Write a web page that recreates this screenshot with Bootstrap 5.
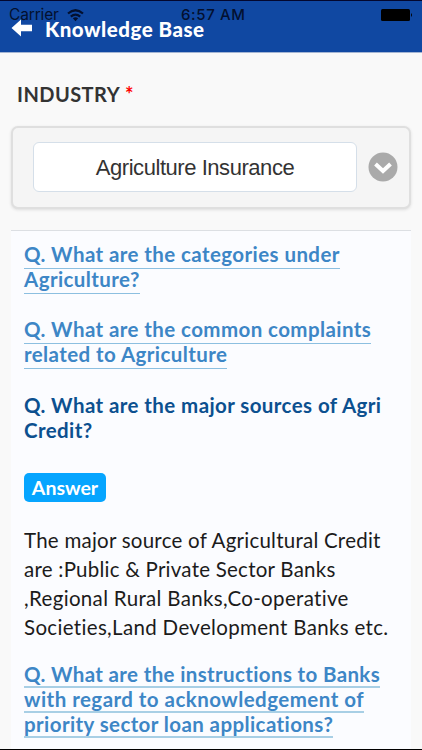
<!DOCTYPE html>
<html lang="en">
<head>
<meta charset="utf-8">
<meta name="viewport" content="width=device-width, initial-scale=1">
<title>Knowledge Base</title>
<link href="https://cdn.jsdelivr.net/npm/bootstrap@5.3.0/dist/css/bootstrap.min.css" rel="stylesheet">
<style>
body{background:#f9f9f9;font-family:Lato,"Open Sans",sans-serif;height:750px;overflow:hidden;border-bottom:1px solid #000}
.topbar{height:53px;background:#1048a2;border-top:1px solid #03072e;border-bottom:1px solid #a4b5d3}
.status{top:4px;left:0;right:0;height:20px;padding:0 9px;color:#03102f;font:15.5px/20px Inter,sans-serif;letter-spacing:-.15px}
.clock{left:181px;top:0;font-weight:500;font-size:15px;letter-spacing:.65px}
.screen-title{padding:16px 0 0 11px;color:#fff;font-size:20.5px;line-height:24px;font-weight:900;letter-spacing:.5px}
.screen-title span{margin-left:12px}
.field-label{margin:29px 0 0 17px;font-size:20px;line-height:24px;color:#333}
.field-label .lbl{letter-spacing:.45px}
.field-label i{color:red;font-style:normal}
.picker{margin:20px 11px 0;height:83px;border:2px solid #dfdfdf;border-radius:7px;background:#f5f5f5;box-shadow:0 1px 3px #ddd;padding:0 11px 2px 20px}
.picker-value{width:324px;height:50px;border:1px solid #d5dfe9;border-radius:6px;background:#fff;font:22px/50px "Liberation Sans",Arial,sans-serif;letter-spacing:-.45px;color:#333;text-align:center}
.panel{margin:21px 11px 0;padding:13px 13px 0;background:#fbfcff;border-top:1px solid #dcdfe3;height:519px}
.q{font-size:20.5px;line-height:21px;font-weight:700;color:#3d86c6;text-decoration:none;letter-spacing:.41px;margin-bottom:25px}
.q span,.copy span{display:block;width:max-content;white-space:nowrap}
.q span{height:25px;border-bottom:1px solid #8cbfe0}
.q.thick{line-height:22px;letter-spacing:.36px;margin-bottom:0}
.q.thick span{border-bottom:2px solid #a8cfe5}
.q.thick span:nth-child(2){letter-spacing:.46px}
.q.thick span:nth-child(3){letter-spacing:.4px}
.q.open{color:#0c508f;margin:26px 0 28px}
.q.open span{border-color:transparent}
.answer-tag{width:82px;height:29px;border-radius:5px;background:#06a5ff;font-size:19.5px;line-height:30px}
.copy{font-size:20.5px;line-height:29px;color:#1b1b1b;margin:24px 0 21px;letter-spacing:.24px}
.copy span:nth-child(n+3){letter-spacing:.33px}
</style>
<script src="https://cdn.jsdelivr.net/npm/bootstrap@5.3.0/dist/js/bootstrap.bundle.min.js"></script>
</head>
<body>
<header class="topbar position-relative">
  <div class="screen-title d-flex align-items-center">
    <svg width="22" height="20" viewBox="0 0 22 20"><path d="M.5 9 10 .5V5.800H21V12.200H10V17.500Z" fill="#fff"/></svg>
    <span>Knowledge Base</span>
  </div>
  <div class="status position-absolute d-flex align-items-center">
    <span>Carrier</span>
    <svg class="ms-2" width="17" height="13" viewBox="0 0 17 13" fill="none" stroke="#03102f" stroke-width="2.2"><path d="M1 4.500Q8.500-2 16 4.500M3.800 7.600Q8.500 3.500 13.200 7.600"/><path d="M5.800 9.300Q8.500 7.200 11.200 9.300L8.500 12.300Z" fill="#03102f" stroke="none"/></svg>
    <span class="clock position-absolute">6:57 AM</span>
    <svg class="ms-auto" width="32" height="13" viewBox="0 0 32 13"><rect width="29" height="12" rx="1.500"/><path d="M30 4Q32 6 30 8Z"/></svg>
  </div>
</header>
<main>
  <div class="field-label fw-bold"><span class="lbl">INDUSTRY</span> <i>*</i></div>
  <div class="picker d-flex align-items-center justify-content-between">
    <div class="picker-value">Agriculture Insurance</div>
    <svg width="30" height="30" viewBox="0 0 30 30"><circle cx="15" cy="15" r="14.500" fill="#aaa"/><path d="M7.500 12 15 19 22.500 12" fill="none" stroke="#fff" stroke-width="4"/></svg>
  </div>
  <section class="panel">
    <a class="q d-block"><span>Q. What are the categories under</span><span>Agriculture?</span></a>
    <a class="q d-block"><span>Q. What are the common complaints</span><span>related to Agriculture</span></a>
    <a class="q open d-block"><span>Q. What are the major sources of Agri</span><span>Credit?</span></a>
    <div class="answer-tag text-white text-center fw-bold">Answer</div>
    <p class="copy"><span>The major source of Agricultural Credit</span><span>are :Public &amp; Private Sector Banks</span><span>,Regional Rural Banks,Co-operative</span><span>Societies,Land Development Banks etc.</span></p>
    <a class="q thick d-block"><span>Q. What are the instructions to Banks</span><span>with regard to acknowledgement of</span><span>priority sector loan applications?</span></a>
  </section>
</main>
</body>
</html>
